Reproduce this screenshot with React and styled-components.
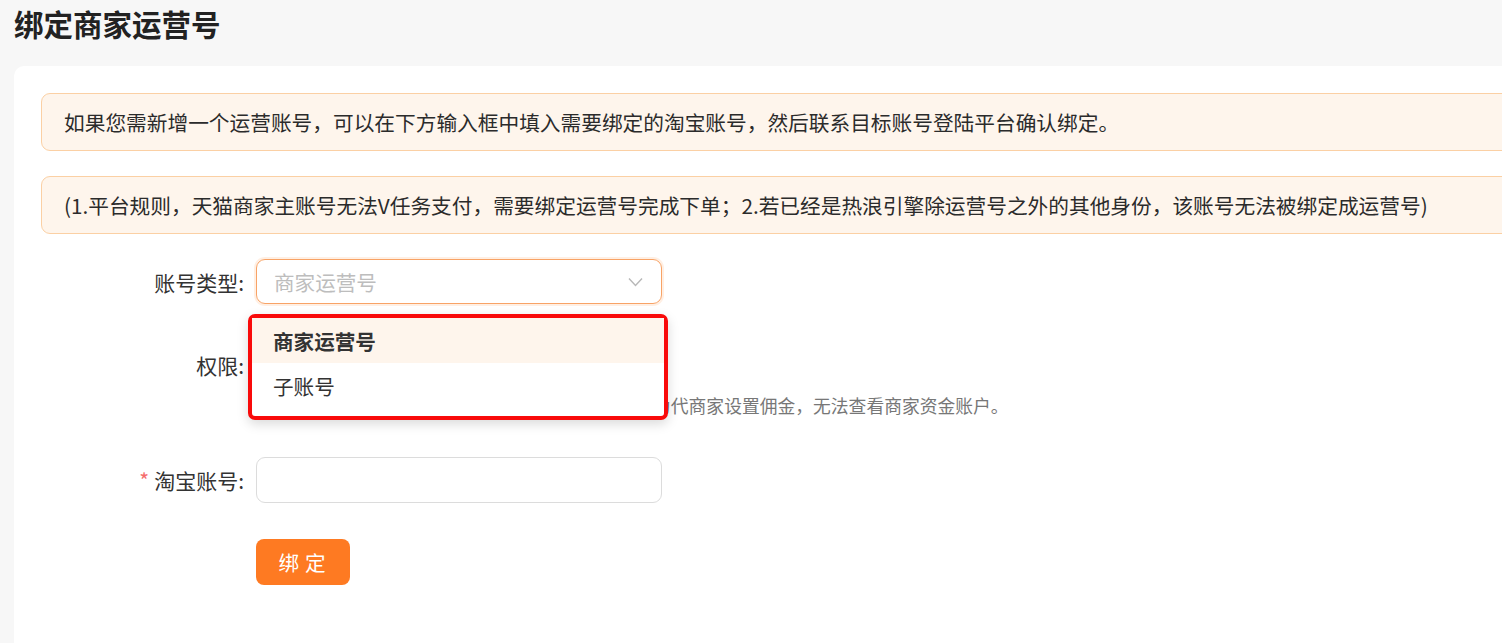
import React from 'react'
import styled, { createGlobalStyle } from 'styled-components'

const GlobalStyle = createGlobalStyle`
  html, body {
    margin: 0;
    padding: 0;
    background: #f7f7f7;
    overflow: hidden;
  }
  body {
    font-family: "Noto Sans CJK SC", "Noto Sans", sans-serif;
    color: #333;
  }
`

const Page = styled.div`
  padding: 0 0 0 14px;
  width: 1560px;
`

const Title = styled.h1`
  margin: 0;
  padding-top: 3px;
  height: 63px;
  font-size: 29.5px;
  line-height: 40px;
  font-weight: 700;
  color: #222;
`

const Card = styled.div`
  background: #fff;
  border-radius: 10px;
  padding: 27px;
  height: 550px;
`

const Alert = styled.div`
  box-sizing: border-box;
  height: 58px;
  padding: 0 22px;
  display: flex;
  align-items: center;
  background: #fef5ec;
  border: 1.5px solid #fbd0a4;
  border-radius: 9px;
  font-size: 20.7px;
  color: #2b2b2b;
  & + & {
    margin-top: 25px;
  }
`

const Form = styled.div`
  margin-top: 25px;
`

const Row = styled.div`
  display: flex;
  align-items: flex-start;
  margin-top: ${p => p.$top || 0}px;
`

const Label = styled.div`
  box-sizing: border-box;
  width: 215px;
  padding-right: 12px;
  text-align: right;
  font-size: 21px;
  line-height: 46px;
  color: #333;
  flex-shrink: 0;

  span {
    color: #f56c6c;
    margin-right: 5px;
  }
`

const Field = styled.div`
  position: relative;
  width: 406px;
`

const Select = styled.div`
  box-sizing: border-box;
  height: 45px;
  display: flex;
  align-items: center;
  justify-content: space-between;
  padding: 0 18px 0 17px;
  border: 1.5px solid #f8a366;
  border-radius: 9px;
  box-shadow: 0 0 0 2px rgba(253, 164, 100, 0.18);
  font-size: 20.6px;
  color: #bdbdbd;
`

const Input = styled.div`
  box-sizing: border-box;
  height: 46px;
  border: 1.5px solid #dcdcdc;
  border-radius: 9px;
`

const PermLine = styled.div`
  height: 46px;
`

/* the start of the hint sits under the open dropdown; only its tail shows */
const Help = styled.div`
  white-space: nowrap;
  font-size: 17.8px;
  line-height: 22px;
  color: #777;
  margin: 6px 0 0 397px;
`

const Dropdown = styled.ul`
  position: absolute;
  z-index: 5;
  top: 55px;
  left: -8px;
  width: 420px;
  box-sizing: border-box;
  margin: 0;
  padding: 0 0 8px;
  list-style: none;
  background: #fff;
  border: 4px solid #f90a0a;
  border-radius: 7px;
  box-shadow: 0 4px 12px rgba(0, 0, 0, 0.15);
`

const Option = styled.li`
  height: 45px;
  padding-left: 21px;
  display: flex;
  align-items: center;
  font-size: 20.6px;
  color: #333;
  font-weight: ${p => (p.$active ? 700 : 400)};
  background: ${p => (p.$active ? '#fef5ec' : 'transparent')};
`

const Button = styled.button`
  width: 94px;
  height: 46px;
  border: none;
  border-radius: 8px;
  background: #fe7a22;
  color: #fff;
  font-family: inherit;
  font-size: 20.6px;
  letter-spacing: 6px;
  padding-left: 10px;
`

const Arrow = () => (
  <svg width="15" height="10" viewBox="0 0 15 10" fill="none">
    <path d="M1 1.5l6.5 7 6.5-7" stroke="#b8b8b8" strokeWidth="1.4" />
  </svg>
)

const App = () => {
  return (
    <Page>
      <GlobalStyle />
      <Title>绑定商家运营号</Title>
      <Card>
        <Alert>如果您需新增一个运营账号，可以在下方输入框中填入需要绑定的淘宝账号，然后联系目标账号登陆平台确认绑定。</Alert>
        <Alert>(1.平台规则，天猫商家主账号无法V任务支付，需要绑定运营号完成下单；2.若已经是热浪引擎除运营号之外的其他身份，该账号无法被绑定成运营号)</Alert>
        <Form>
          <Row>
            <Label>账号类型:</Label>
            <Field>
              <Select>
                商家运营号
                <Arrow />
              </Select>
              <Dropdown>
                <Option $active>商家运营号</Option>
                <Option>子账号</Option>
              </Dropdown>
            </Field>
          </Row>
          <Row $top={37}>
            <Label>权限:</Label>
            <Field>
              <PermLine />
              <Help>为代商家设置佣金，无法查看商家资金账户。</Help>
            </Field>
          </Row>
          <Row $top={41}>
            <Label><span>*</span>淘宝账号:</Label>
            <Field>
              <Input />
            </Field>
          </Row>
          <Row $top={36}>
            <Label />
            <Button>绑定</Button>
          </Row>
        </Form>
      </Card>
    </Page>
  )
}

export default App
